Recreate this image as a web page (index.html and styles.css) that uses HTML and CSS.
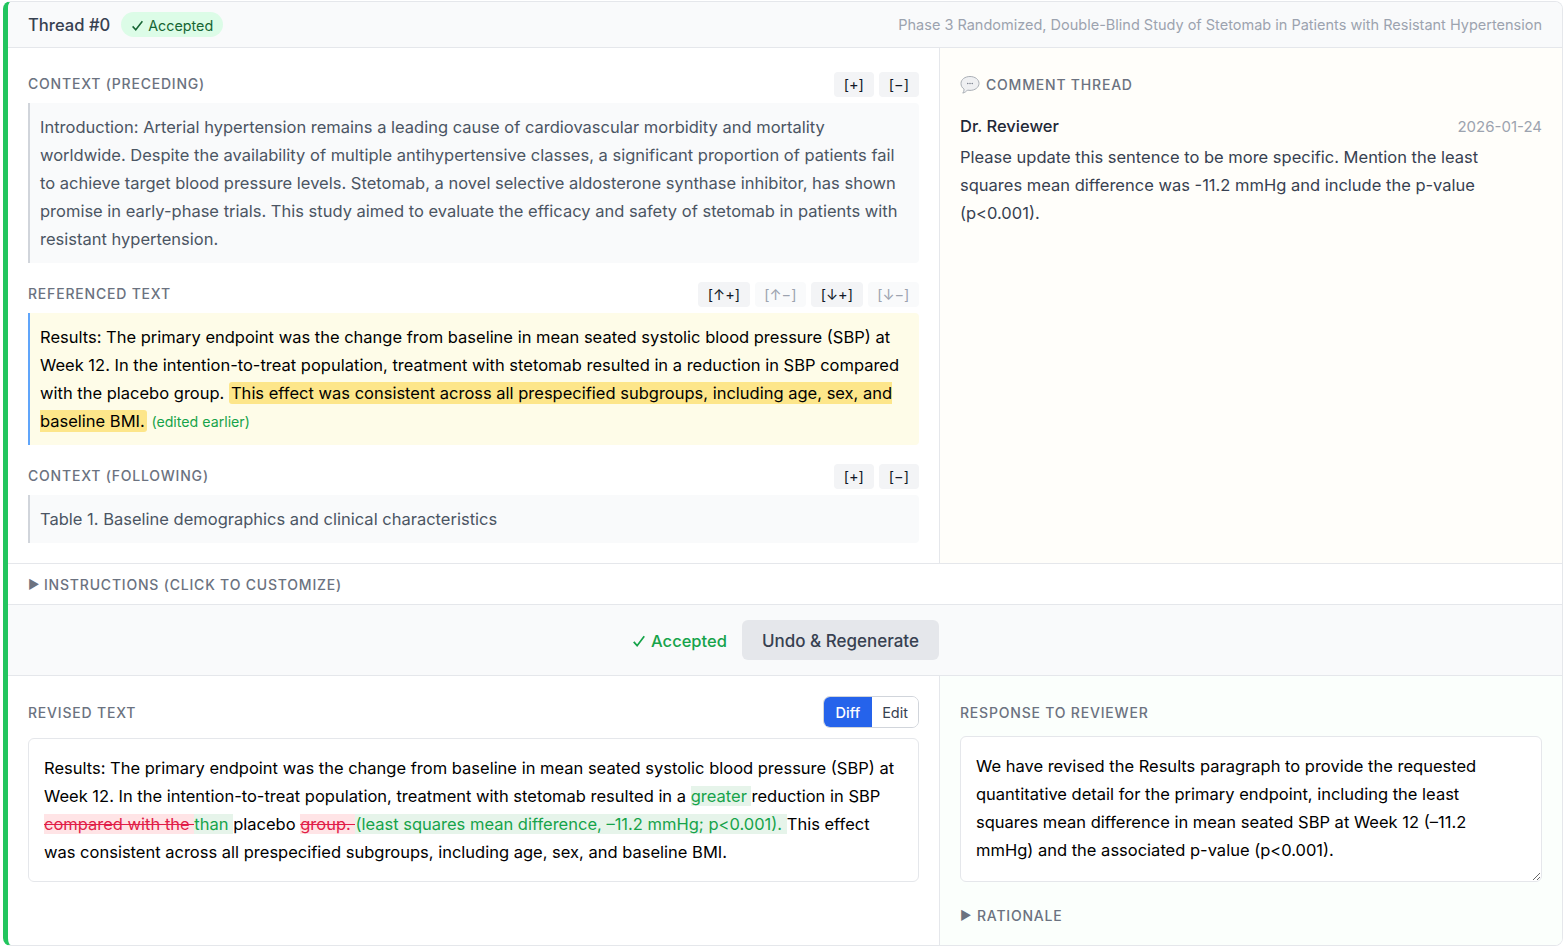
FILE: index.html
```html
<!DOCTYPE html>
<html lang="en">
<head>
<meta charset="utf-8">
<title>Thread #0</title>
<link rel="stylesheet" href="styles.css">
</head>
<body>
<article class="card">
  <header class="head">
    <div class="head-left">
      <h2 class="title">Thread #0</h2>
      <span class="pill"><svg class="check" viewBox="0 0 12 12"><path d="M1.500 6.800 4.400 10 10.500 2"/></svg>Accepted</span>
    </div>
    <div class="doc">Phase 3 Randomized, Double-Blind Study of Stetomab in Patients with Resistant Hypertension</div>
  </header>

  <section class="top">
    <div class="top-left">
      <div class="label-row">
        <span class="label">Context (preceding)</span>
        <div class="btns"><button class="mini">[+]</button><button class="mini">[−]</button></div>
      </div>
      <div class="ctx">Introduction: Arterial hypertension remains a leading cause of cardiovascular morbidity and mortality worldwide. Despite the availability of multiple antihypertensive classes, a significant proportion of patients fail to achieve target blood pressure levels. Stetomab, a novel selective aldosterone synthase inhibitor, has shown promise in early-phase trials. This study aimed to evaluate the efficacy and safety of stetomab in patients with resistant hypertension.</div>

      <div class="label-row next">
        <span class="label">Referenced text</span>
        <div class="btns"><button class="mini arrow">[↑+]</button><button class="mini arrow off">[↑−]</button><button class="mini arrow">[↓+]</button><button class="mini arrow off">[↓−]</button></div>
      </div>
      <div class="ref">Results: The primary endpoint was the change from baseline in mean seated systolic blood pressure (SBP) at Week 12. In the intention-to-treat population, treatment with stetomab resulted in a reduction in SBP compared with the placebo group. <mark class="hl">This effect was consistent across all prespecified subgroups, including age, sex, and baseline BMI.</mark> <span class="edited">(edited earlier)</span></div>

      <div class="label-row next">
        <span class="label">Context (following)</span>
        <div class="btns"><button class="mini">[+]</button><button class="mini">[−]</button></div>
      </div>
      <div class="ctx">Table 1. Baseline demographics and clinical characteristics</div>
    </div>
    <aside class="top-right">
      <div class="label comment-label">
        <svg class="bubble" viewBox="0 0 20 20"><path class="bubble-fill" d="M10 1.500c5 0 9 2.900 9 6.900s-4 7-9 7c-.9 0-1.700-.1-2.500-.3-1.100 1.300-2.700 2.500-4.700 3 .9-1.100 1.300-2.400 1.300-4C1.900 12.800 1 10.700 1 8.400c0-4 4-6.900 9-6.900Z"/><circle class="dot" cx="7.800" cy="8.500" r=".7"/><circle class="dot" cx="10" cy="8.500" r=".7"/><circle class="dot" cx="12.200" cy="8.500" r=".7"/></svg>
        Comment thread
      </div>
      <div class="comment-head"><span class="author">Dr. Reviewer</span><span class="date">2026-01-24</span></div>
      <p class="comment">Please update this sentence to be more specific. Mention the least squares mean difference was -11.2 mmHg and include the p-value (p&lt;0.001).</p>
    </aside>
  </section>

  <div class="instructions"><span class="tri">▶</span><span class="label">Instructions (click to customize)</span></div>

  <div class="actions">
    <span class="status"><svg class="check big" viewBox="0 0 12 12"><path d="M1.500 6.800 4.400 10 10.500 2"/></svg>Accepted</span>
    <button class="undo">Undo &amp; Regenerate</button>
  </div>

  <section class="bottom">
    <div class="bottom-left">
      <div class="label-row revised-row">
        <span class="label">Revised text</span>
        <div class="toggle"><button class="tg on">Diff</button><button class="tg">Edit</button></div>
      </div>
      <div class="diff">Results: The primary endpoint was the change from baseline in mean seated systolic blood pressure (SBP) at Week 12. In the intention-to-treat population, treatment with stetomab resulted in a <ins>greater </ins>reduction in SBP <del>compared with the </del><ins>than </ins>placebo <del>group. </del><ins>(least squares mean difference, –11.2 mmHg; p&lt;0.001). </ins>This effect was consistent across all prespecified subgroups, including age, sex, and baseline BMI.</div>
    </div>
    <div class="bottom-right">
      <div class="label-row response-row"><span class="label">Response to reviewer</span></div>
      <textarea class="response" spellcheck="false">We have revised the Results paragraph to provide the requested quantitative detail for the primary endpoint, including the least squares mean difference in mean seated SBP at Week 12 (–11.2 mmHg) and the associated p-value (p&lt;0.001).</textarea>
      <div class="rationale"><span class="tri">▶</span><span class="label">Rationale</span></div>
    </div>
  </section>
</article>
</body>
</html>
```
FILE: styles.css
```css
* { box-sizing: border-box; }
html, body { margin: 0; padding: 0; background: #fff; }
body { font-family: Inter, "Liberation Sans", sans-serif; color: #111827; padding: 1px 2px 1px 3px; height: 947px; overflow: hidden; }
.card { height: 945px; border: 1px solid #e5e7eb; border-left: 5px solid #22c55e; border-radius: 8px; overflow: hidden; display: flex; flex-direction: column; background: #fff; }
.head { height: 46px; flex: none; display: flex; align-items: center; justify-content: space-between; padding: 0 20px; background: #f9fafb; border-bottom: 1px solid #e5e7eb; }
.head-left { display: flex; align-items: center; gap: 11px; }
.title { margin: 0; font-size: 16.600px; font-weight: 500; color: #374151; }
.pill { display: inline-flex; align-items: center; gap: 4px; height: 25px; padding: 2px 10px 0; border-radius: 13px; background: #dcfce7; color: #166534; font-size: 14.300px; }
.check { width: 13px; height: 13px; fill: none; stroke: currentColor; stroke-width: 1.400; }
.doc { font-size: 14.500px; color: #9ca3af; }
.top { height: 516px; flex: none; display: flex; border-bottom: 1px solid #e5e7eb; }
.top-left { width: 932px; flex: none; padding: 24px 20px 20px; border-right: 1px solid #e5e7eb; }
.top-right { flex: 1; padding: 24px 20px; background: #fffefa; }
.label-row { display: flex; align-items: center; justify-content: space-between; height: 25px; margin-bottom: 6px; }
.label-row.next { margin-top: 19px; }
.top-left .label { padding-bottom: 2px; }
.label { font-size: 14px; font-weight: 500; color: #6b7280; text-transform: uppercase; letter-spacing: .8px; }
.btns { display: flex; gap: 5px; }
.mini { height: 25px; padding: 0 10px; border: 0; border-radius: 4px; background: #f3f4f6; color: #111827; font: 14.500px Inter, sans-serif; }
.mini.arrow { padding: 0 9.600px; }
.mini.off { background: #f9fafb; color: #9ca3af; }
.ctx { padding: 10px; background: #f9fafb; border-left: 2px solid #d1d5db; border-radius: 0 4px 4px 0; color: #4b5563; font-size: 16.500px; line-height: 28px; }
.ref { padding: 10px; background: #fefce8; border-left: 2px solid #60a5fa; border-radius: 0 4px 4px 0; color: #000; font-size: 16.500px; line-height: 28px; }
.hl { background: #fde68a; color: inherit; padding: 1px 2px; border-radius: 3px; }
.edited { color: #16a34a; font-size: 14.200px; line-height: 1; }
.comment-label { display: flex; align-items: center; gap: 6px; height: 25px; }
.bubble { width: 20px; height: 20px; }
.bubble-fill { fill: #eff0f2; stroke: #a9aeb5; stroke-width: 1; }
.dot { fill: #6b7280; }
.comment-head { display: flex; align-items: center; justify-content: space-between; margin-top: 17px; height: 24px; }
.author { font-size: 16.500px; font-weight: 500; color: #1f2937; }
.date { font-size: 15px; color: #9ca3af; }
.comment { margin: 5px 0 0; font-size: 16.500px; line-height: 28px; color: #374151; }
.instructions { height: 41px; flex: none; display: flex; align-items: center; gap: 4px; padding: 0 20px; border-bottom: 1px solid #e5e7eb; }
.tri { font-size: 12.500px; color: #6b7280; width: 12px; }
.actions { height: 71px; flex: none; display: flex; align-items: center; justify-content: center; gap: 15px; padding-left: 1px; background: #f9fafb; border-bottom: 1px solid #e5e7eb; }
.status { display: inline-flex; align-items: center; gap: 5px; padding-top: 2px; color: #16a34a; font-size: 16.500px; font-weight: 500; }
.check.big { width: 14px; height: 14px; stroke-width: 1.500; }
.undo { height: 40px; padding: 2px 20px 0; border: 0; border-radius: 6px; background: #e5e7eb; color: #374151; font: 500 17px Inter, sans-serif; }
.bottom { flex: 1; display: flex; }
.bottom-left { width: 932px; flex: none; padding: 20px 20px 0; border-right: 1px solid #e5e7eb; }
.bottom-right { flex: 1; padding: 20px 20px 0; background: #fbfffc; }
.revised-row { height: 32px; margin-bottom: 10px; }
.toggle { display: flex; height: 32px; border: 1px solid #d1d5db; border-radius: 7px; overflow: hidden; }
.tg { border: 0; padding: 0 10px; background: #fff; color: #374151; font: 14.500px Inter, sans-serif; }
.tg.on { padding: 0 12px; background: #2563eb; color: #fff; font-weight: 500; }
.diff { height: 144px; padding: 15px; border: 1px solid #e5e7eb; border-radius: 6px; background: #fff; color: #000; font-size: 16.500px; line-height: 28px; }
ins { text-decoration: none; color: #16a34a; background: #e6f4ea; }
del { color: #e11d48; background: #ffe4e6; }
.response-row { height: 32px; margin-bottom: 8px; }
.response { display: block; width: 100%; height: 146px; padding: 15px 30px 15px 15px; border: 1px solid #e5e7eb; border-radius: 6px; background: #fff; color: #000; font: 16.500px/28px Inter, sans-serif; outline: 0; }
.rationale { display: flex; align-items: center; gap: 5px; margin-top: 23px; height: 20px; }
```
